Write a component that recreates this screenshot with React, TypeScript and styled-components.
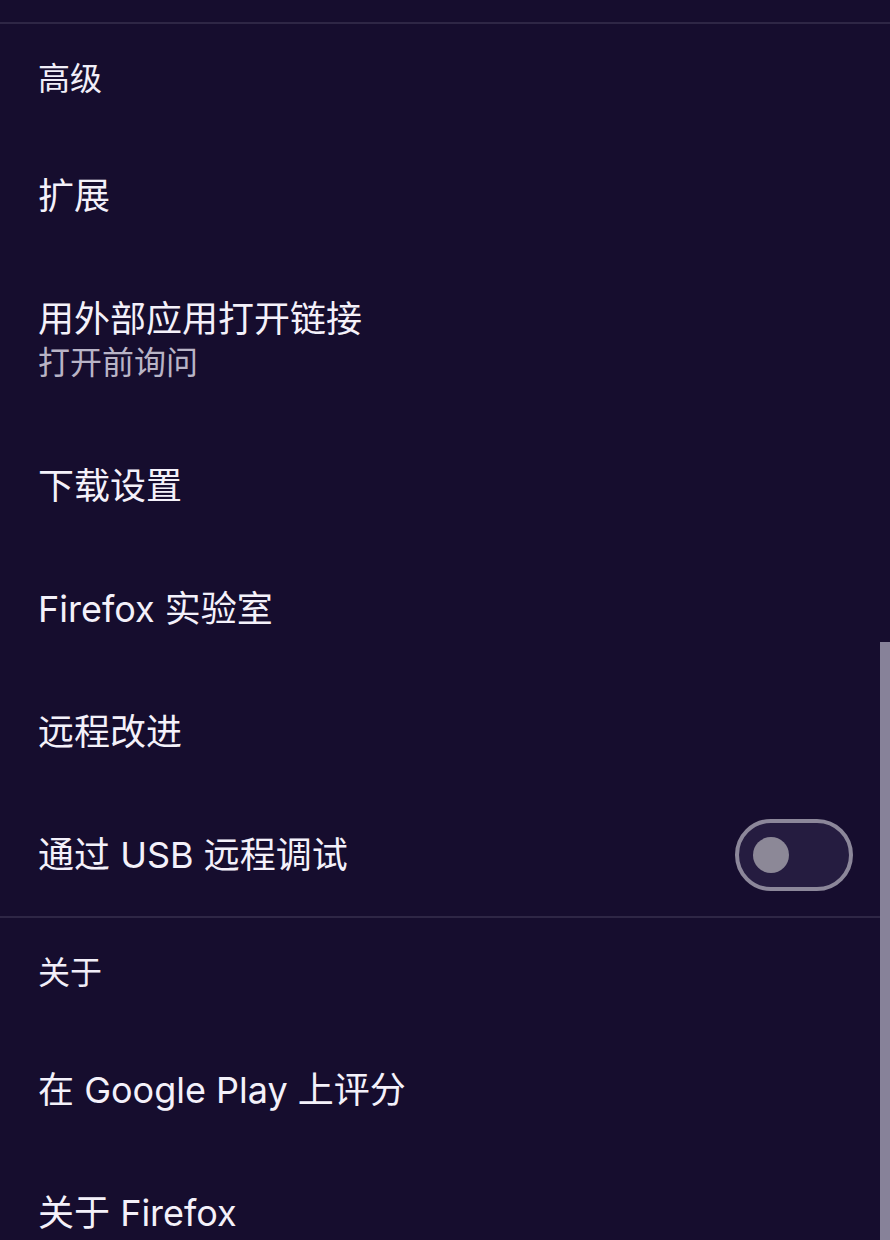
import React from "react";
import styled, { createGlobalStyle } from "styled-components";

const GlobalStyle = createGlobalStyle`
  html, body {
    margin: 0;
    padding: 0;
    background: #160d2e;
  }
  * {
    box-sizing: border-box;
  }
`;

const Page = styled.div`
  position: relative;
  width: 890px;
  height: 1240px;
  overflow: hidden;
  background: #160d2e;
  color: #f4f1fa;
  font-family: Inter, "Noto Sans CJK SC", sans-serif;
`;

const TopSpace = styled.div`
  height: 22px;
`;

const Divider = styled.div`
  height: 2px;
  background: #2e2645;
`;

const Section = styled.section`
  display: flex;
  flex-direction: column;
`;

const Heading = styled.div`
  height: 110px;
  display: flex;
  align-items: center;
  padding: 0 0 6px 38px;
  font-size: 32px;
  color: #f1eef8;
`;

const Row = styled.div<{ $tall?: boolean }>`
  height: ${(p) => (p.$tall ? 167 : 123)}px;
  display: flex;
  align-items: center;
  justify-content: space-between;
  padding: 0 37px 0 38px;
`;

const Labels = styled.div`
  display: flex;
  flex-direction: column;
`;

const Title = styled.div`
  font-size: 36px;
  line-height: 44px;
  color: #f4f1fa;
`;

const Subtitle = styled.div`
  font-size: 32px;
  line-height: 44px;
  color: #b9b4c6;
`;

const Switch = styled.div`
  width: 118px;
  height: 72px;
  border: 4px solid #8c879a;
  border-radius: 36px;
  background: #251c40;
  display: flex;
  align-items: center;
  padding-left: 14px;
`;

const Knob = styled.div`
  width: 36px;
  height: 36px;
  border-radius: 50%;
  background: #8c8897;
`;

const Scrollbar = styled.div`
  position: absolute;
  right: 0;
  top: 642px;
  width: 10px;
  height: 600px;
  background: #878299;
`;

type Item = { title: string; subtitle?: string; toggle?: boolean };

const advanced: Item[] = [
  { title: "扩展" },
  { title: "用外部应用打开链接", subtitle: "打开前询问" },
  { title: "下载设置" },
  { title: "Firefox 实验室" },
  { title: "远程改进" },
  { title: "通过 USB 远程调试", toggle: true }
];

const about: Item[] = [
  { title: "在 Google Play 上评分" },
  { title: "关于 Firefox" }
];

const SettingRow: React.FC<{ item: Item }> = ({ item }) => (
  <Row $tall={!!item.subtitle}>
    <Labels>
      <Title>{item.title}</Title>
      {item.subtitle && <Subtitle>{item.subtitle}</Subtitle>}
    </Labels>
    {item.toggle && (
      <Switch>
        <Knob />
      </Switch>
    )}
  </Row>
);

export default function App() {
  return (
    <>
      <GlobalStyle />
      <Page>
        <TopSpace />
        <Divider />
        <Section>
          <Heading>高级</Heading>
          {advanced.map((item) => (
            <SettingRow key={item.title} item={item} />
          ))}
        </Section>
        <Divider />
        <Section>
          <Heading>关于</Heading>
          {about.map((item) => (
            <SettingRow key={item.title} item={item} />
          ))}
        </Section>
        <Scrollbar />
      </Page>
    </>
  );
}
